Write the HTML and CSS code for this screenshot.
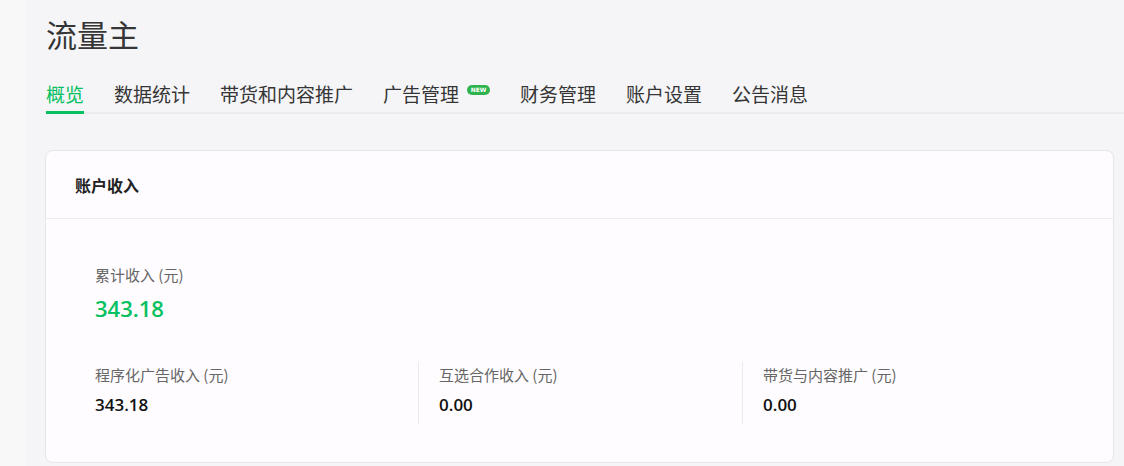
FILE: index.html
```html
<!DOCTYPE html>
<html lang="zh-CN">
<head>
<meta charset="utf-8">
<title>流量主</title>
<link rel="stylesheet" href="styles.css">
</head>
<body>
<div class="page">
  <h1 class="title">流量主</h1>
  <nav class="tabs">
    <a class="tab active">概览</a>
    <a class="tab">数据统计</a>
    <a class="tab">带货和内容推广</a>
    <a class="tab">广告管理<span class="badge">NEW</span></a>
    <a class="tab">财务管理</a>
    <a class="tab">账户设置</a>
    <a class="tab">公告消息</a>
  </nav>
  <section class="card">
    <header class="card-head">账户收入</header>
    <div class="card-body">
      <div class="total">
        <div class="label">累计收入 (元)</div>
        <div class="total-value">343.18</div>
      </div>
      <div class="stats">
        <div class="stat">
          <div class="label">程序化广告收入 (元)</div>
          <div class="value">343.18</div>
        </div>
        <div class="stat">
          <div class="label">互选合作收入 (元)</div>
          <div class="value">0.00</div>
        </div>
        <div class="stat">
          <div class="label">带货与内容推广 (元)</div>
          <div class="value">0.00</div>
        </div>
      </div>
    </div>
  </section>
</div>
</body>
</html>
```

FILE: styles.css
```css
html, body {
  margin: 0;
  padding: 0;
}
body {
  background: linear-gradient(to right, #f8f8f9 0, #f8f8f9 24px, #f5f5f8 28px, #f5f5f8 100%);
  font-family: "Open Sans", "Noto Sans CJK SC", sans-serif;
  color: #333;
  height: 466px;
  overflow: hidden;
}
.page {
  padding: 0 10px 0 45px;
}
.title {
  margin: 0;
  padding: 13px 0 0 1px;
  font-family: "Noto Sans CJK SC", sans-serif;
  font-weight: 400;
  font-size: 31px;
  line-height: 42px;
  color: #353535;
}
.tabs {
  display: flex;
  gap: 30px;
  margin-top: 25px;
  padding-left: 1px;
  border-bottom: 2px solid #ebebee;
  margin-right: -10px;
}
.tab {
  position: relative;
  display: flex;
  align-items: center;
  font-family: "Noto Sans CJK SC", sans-serif;
  font-size: 19px;
  line-height: 28px;
  padding-bottom: 4px;
  color: #353535;
}
.tab.active {
  color: #07c160;
}
.tab.active::after {
  content: "";
  position: absolute;
  left: 0;
  right: 0;
  bottom: -2px;
  height: 3px;
  background: #07c160;
}
.badge {
  margin-left: 8px;
  background: #2fb34f;
  color: #fff;
  font-family: "DejaVu Sans", sans-serif;
  font-weight: 700;
  font-size: 6px;
  line-height: 10px;
  height: 10px;
  width: 23px;
  text-align: center;
  border-radius: 6px;
  margin-top: -8px;
}
.card {
  margin-top: 36px;
  background: #fefcfe;
  border: 1px solid #e6e6ea;
  border-radius: 8px;
  height: 313px;
  box-sizing: border-box;
}
.card-head {
  height: 67px;
  display: flex;
  align-items: center;
  padding-left: 29px;
  font-family: "Noto Sans CJK SC", sans-serif;
  font-weight: 700;
  font-size: 16px;
  color: #222;
  border-bottom: 1px solid #ececef;
}
.card-body {
  padding: 45px 0 0 49px;
}
.label {
  font-family: "Noto Sans CJK SC", sans-serif;
  font-size: 15px;
  line-height: 22px;
  color: #666;
}
.total-value {
  margin-top: 9px;
  font-family: "Open Sans", sans-serif;
  font-weight: 600;
  font-size: 22px;
  line-height: 26px;
  color: #07c160;
}
.stats {
  display: grid;
  grid-template-columns: 323px 324px 1fr;
  margin-top: 41px;
}
.stat {
  padding: 2px 0 8px 20px;
  border-left: 1px solid #ebebee;
}
.stat:first-child {
  padding-left: 0;
  border-left: none;
}
.value {
  margin-top: 8px;
  font-family: "Open Sans", sans-serif;
  font-weight: 600;
  font-size: 17px;
  line-height: 22px;
  color: #111;
}
```
